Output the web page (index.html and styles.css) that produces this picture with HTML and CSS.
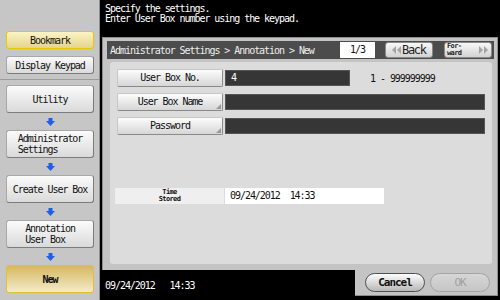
FILE: index.html
```html
<!DOCTYPE html>
<html lang="en">
<head>
    <meta charset="UTF-8">
    <title>Administrator Settings - Annotation - New</title>
    <link rel="stylesheet" href="styles.css">
</head>
<body>

    <div class="sidebar">
        <div class="sidebar-top">
            <div class="side-btn short active">Bookmark</div>
            <div class="side-btn short">Display Keypad</div>
        </div>
        <div class="sidebar-flow">
            <div class="side-btn"><span>Utility</span></div>
            <div class="arrow"><svg width="9" height="8" viewBox="0 0 9 8"><rect x="2.5" y="0" width="4" height="3" fill="#1f5fe6"/><polygon points="0,3 9,3 4.5,8" fill="#1f5fe6"/></svg></div>
            <div class="side-btn"><span>Administrator<br>Settings</span></div>
            <div class="arrow"><svg width="9" height="8" viewBox="0 0 9 8"><rect x="2.5" y="0" width="4" height="3" fill="#1f5fe6"/><polygon points="0,3 9,3 4.5,8" fill="#1f5fe6"/></svg></div>
            <div class="side-btn"><span>Create User Box</span></div>
            <div class="arrow"><svg width="9" height="8" viewBox="0 0 9 8"><rect x="2.5" y="0" width="4" height="3" fill="#1f5fe6"/><polygon points="0,3 9,3 4.5,8" fill="#1f5fe6"/></svg></div>
            <div class="side-btn"><span>Annotation<br>User Box</span></div>
            <div class="arrow"><svg width="9" height="8" viewBox="0 0 9 8"><rect x="2.5" y="0" width="4" height="3" fill="#1f5fe6"/><polygon points="0,3 9,3 4.5,8" fill="#1f5fe6"/></svg></div>
            <div class="side-btn current"><span>New</span></div>
        </div>
    </div>

    <div class="main">
        <div class="message">Specify the settings.<br>Enter User Box number using the keypad.</div>

        <div class="panel">
            <div class="titlebar">
                <div class="crumbs">Administrator Settings &gt; Annotation &gt; New</div>
                <div class="page-count">1/3</div>
                <div class="nav-btn back">
                    <svg width="9" height="8" viewBox="0 0 9 8"><polygon points="4,0 4,8 0,4" fill="#a4a4a4"/><polygon points="9,0 9,8 5,4" fill="#a4a4a4"/></svg>
                    <span>Back</span>
                </div>
                <div class="nav-btn forward">
                    <span>For-<br>ward</span>
                    <svg width="9" height="8" viewBox="0 0 9 8"><polygon points="0,0 0,8 4,4" fill="#a4a4a4"/><polygon points="5,0 5,8 9,4" fill="#a4a4a4"/></svg>
                </div>
            </div>

            <div class="content">
                <div class="row">
                    <div class="field-label">User Box No.</div>
                    <div class="field short">4</div>
                    <div class="range">1 - 999999999</div>
                </div>
                <div class="row">
                    <div class="field-label keyed">User Box Name</div>
                    <div class="field wide"></div>
                </div>
                <div class="row">
                    <div class="field-label keyed">Password</div>
                    <div class="field wide"></div>
                </div>
                <div class="row stored">
                    <div class="stored-label">Time<br>Stored</div>
                    <div class="stored-value">09/24/2012  14:33</div>
                </div>
            </div>
        </div>

        <div class="footer">
            <div class="clock">09/24/2012   14:33</div>
            <div class="actions">
                <div class="pill">Cancel</div>
                <div class="pill disabled">OK</div>
            </div>
        </div>
    </div>

</body>
</html>
```

FILE: styles.css
```css
/* Global styles */
body {
    margin: 0;
    width: 500px;
    height: 300px;
    overflow: hidden;
    display: flex;
    background-color: #000;
    font-family: "DejaVu Sans Mono", "Liberation Mono", monospace;
    font-size: 10px;
    letter-spacing: -1.05px;
    color: #111;
}

/* Left column */
.sidebar {
    width: 100px;
    box-sizing: border-box;
    background-color: #c6c6c6;
    border-right: 1px solid #8e8e8e;
    display: flex;
    flex-direction: column;
}

.sidebar-top {
    height: 80px;
    box-sizing: border-box;
    padding: 31px 0 0 6px;
    border-bottom: 1px solid #9c9c9c;
    display: flex;
    flex-direction: column;
    gap: 7px;
}

.sidebar-flow {
    padding: 5px 0 0 6px;
    display: flex;
    flex-direction: column;
}

.side-btn {
    width: 88px;
    height: 28px;
    box-sizing: border-box;
    display: flex;
    align-items: center;
    justify-content: center;
    border: 1px solid #a8a8a8;
    border-right-color: #7c7c7c;
    border-bottom-color: #7c7c7c;
    border-radius: 3px;
    background: linear-gradient(#fbfbfb, #dadada);
    line-height: 11px;
}

.side-btn span {
    display: inline-block;
    text-align: left;
}

.side-btn.short {
    height: 18px;
}

.side-btn.active {
    border: 1px solid #e8c800;
    background: linear-gradient(#fbf4c4, #e4d48c);
}

.side-btn.current {
    border: 1px solid #e2c030;
    background: linear-gradient(#d6b862, #f3ebc8);
    font-weight: bold;
}

.arrow {
    width: 88px;
    height: 17px;
    display: flex;
    align-items: center;
    justify-content: center;
}

.arrow svg {
    display: block;
}

/* Right column */
.main {
    width: 400px;
    display: flex;
    flex-direction: column;
}

.message {
    height: 37px;
    box-sizing: border-box;
    padding: 4px 0 0 5px;
    color: #fff;
    line-height: 10px;
}

.panel {
    height: 233px;
    box-sizing: border-box;
    margin: 0 2px 0 2px;
    padding: 3px 3px 6px 4px;
    background-color: #c4c4c4;
    border: 1px solid #8c8c8c;
    border-bottom: none;
    display: flex;
    flex-direction: column;
}

.titlebar {
    height: 18px;
    flex-shrink: 0;
    display: flex;
    align-items: center;
    padding: 0 2px 0 3px;
    background-color: #4c4c4c;
    color: #eee;
}

.crumbs {
    flex: 1;
}

.page-count {
    width: 35px;
    height: 16px;
    line-height: 16px;
    text-align: center;
    background-color: #fff;
    color: #111;
    margin-right: 10px;
}

.nav-btn {
    width: 48px;
    height: 16px;
    box-sizing: border-box;
    display: flex;
    align-items: center;
    border: 1px solid #8a8a8a;
    border-radius: 3px;
    background: linear-gradient(#f8f8f8, #d2d2d2);
    color: #222;
}

.nav-btn.back {
    margin-right: 11px;
    padding-left: 6px;
    gap: 1px;
}

.nav-btn.back span {
    font-size: 12px;
    letter-spacing: -1.3px;
}

.nav-btn.forward {
    justify-content: space-between;
    padding: 0 3px 0 2px;
}

.nav-btn.forward span {
    font-size: 7px;
    line-height: 7px;
    letter-spacing: -0.6px;
    font-weight: bold;
}

.content {
    flex: 1;
    margin: 3px 2px 0 3px;
    padding: 7px 0 0 7px;
    background-color: #dcdcdc;
    border-radius: 3px;
}

.row {
    display: flex;
    align-items: center;
    gap: 2px;
    margin-bottom: 6px;
}

.field-label {
    position: relative;
    width: 106px;
    height: 18px;
    box-sizing: border-box;
    line-height: 16px;
    text-align: center;
    border: 1px solid #c8c8c8;
    border-right-color: #8a8a8a;
    border-bottom-color: #8a8a8a;
    border-radius: 2px;
    background: linear-gradient(#fcfcfc, #d6d6d6);
}

/* little corner mark on keyboard-entry fields */
.field-label.keyed::after {
    content: "";
    position: absolute;
    right: 1px;
    bottom: 1px;
    border-style: solid;
    border-width: 0 0 5px 5px;
    border-color: transparent transparent #9a9a9a transparent;
}

.field {
    height: 16px;
    box-sizing: border-box;
    background-color: #363636;
    border: 1px solid #555;
    color: #fff;
    line-height: 14px;
    padding-left: 5px;
}

.field.short {
    width: 125px;
}

.field.wide {
    width: 260px;
}

.range {
    margin-left: 18px;
}

.row.stored {
    margin-top: 53px;
    margin-left: -2px;
    gap: 1px;
}

.stored-label {
    width: 109px;
    height: 16px;
    background-color: #efefef;
    text-align: center;
    font-size: 7px;
    line-height: 7px;
    letter-spacing: -0.6px;
    font-weight: bold;
    padding-top: 1px;
    box-sizing: border-box;
}

.stored-value {
    width: 159px;
    height: 16px;
    line-height: 16px;
    background-color: #fff;
    padding-left: 5px;
    box-sizing: border-box;
    white-space: pre;
}

/* Bottom strip */
.footer {
    height: 30px;
    display: flex;
}

.clock {
    width: 255px;
    box-sizing: border-box;
    padding: 10px 0 0 5px;
    color: #fff;
    white-space: pre;
}

.actions {
    width: 143px;
    height: 26px;
    box-sizing: border-box;
    padding: 3px 0 0 10px;
    display: flex;
    gap: 5px;
    background-color: #c4c4c4;
    border-right: 1px solid #8c8c8c;
    border-bottom: 1px solid #8c8c8c;
}

.pill {
    width: 60px;
    height: 19px;
    box-sizing: border-box;
    line-height: 17px;
    text-align: center;
    border: 1px solid #505050;
    border-radius: 10px;
    background: linear-gradient(#fdfdfd, #b8b8b8);
    font-size: 11px;
    font-weight: bold;
    color: #111;
}

.pill.disabled {
    border-color: #a4a4a4;
    background: linear-gradient(#d6d6d6, #c6c6c6);
    color: #a0a0a0;
    font-weight: normal;
}
```
